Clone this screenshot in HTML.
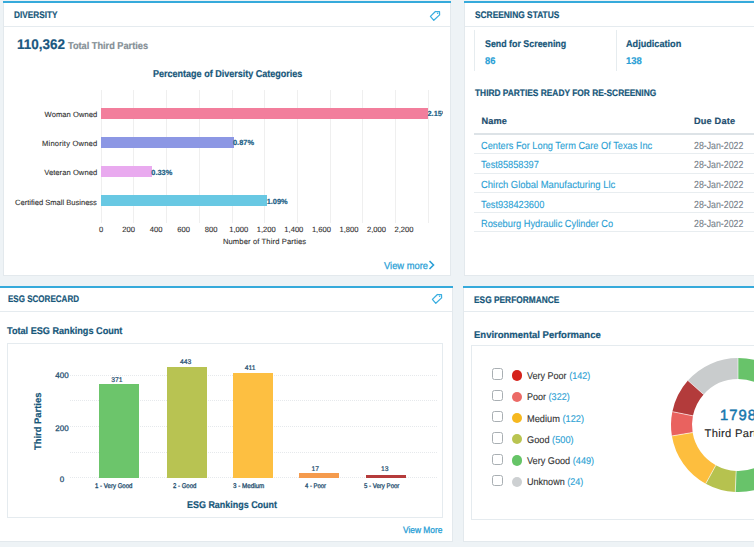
<!DOCTYPE html>
<html><head><meta charset="utf-8"><style>
html,body{margin:0;padding:0;}
body{width:754px;height:547px;overflow:hidden;position:relative;background:#eef3f6;font-family:"Liberation Sans", sans-serif;}
span{text-rendering:geometricPrecision;}
span.r{-webkit-text-stroke:0.12px currentColor;}
span.b{-webkit-text-stroke:0.2px currentColor;}
</style></head><body>
<div style="position:absolute;left:3px;top:1px;width:448px;height:275px;background:#fff;box-sizing:border-box;border:1px solid #e3e9ed;"></div><div style="position:absolute;left:3px;top:1px;width:448px;height:2px;background:#36aadb;"></div><div style="position:absolute;left:4px;top:26px;width:446px;height:1px;background:#e5ebef;"></div><svg style="position:absolute;left:428px;top:9px" width="14" height="14" viewBox="0 0 14 14"><path d="M2.4 7.4 L7.4 2.5 L11.5 2.6 L11.6 5.9 L5.8 11.3 Z" fill="none" stroke="#3aaee0" stroke-width="1.25" stroke-linejoin="round"/><circle cx="9.6" cy="4.3" r="0.75" fill="#3aaee0"/></svg><div style="position:absolute;left:101px;top:90px;width:1px;height:133px;background:#efefef;"></div><div style="position:absolute;left:133px;top:90px;width:1px;height:133px;background:#efefef;"></div><div style="position:absolute;left:166px;top:90px;width:1px;height:133px;background:#efefef;"></div><div style="position:absolute;left:199px;top:90px;width:1px;height:133px;background:#efefef;"></div><div style="position:absolute;left:232px;top:90px;width:1px;height:133px;background:#efefef;"></div><div style="position:absolute;left:264px;top:90px;width:1px;height:133px;background:#efefef;"></div><div style="position:absolute;left:297px;top:90px;width:1px;height:133px;background:#efefef;"></div><div style="position:absolute;left:330px;top:90px;width:1px;height:133px;background:#efefef;"></div><div style="position:absolute;left:362px;top:90px;width:1px;height:133px;background:#efefef;"></div><div style="position:absolute;left:395px;top:90px;width:1px;height:133px;background:#efefef;"></div><div style="position:absolute;left:428px;top:90px;width:1px;height:133px;background:#efefef;"></div><div style="position:absolute;left:101px;top:107.5px;width:327px;height:11px;background:#f27e9c;"></div><div style="position:absolute;left:101px;top:136.7px;width:132.5px;height:11px;background:#8c97e4;"></div><div style="position:absolute;left:101px;top:165.9px;width:50.80000000000001px;height:11px;background:#e9aaef;"></div><div style="position:absolute;left:101px;top:195.1px;width:166.2px;height:11px;background:#68c8e3;"></div><svg style="position:absolute;left:428px;top:260px" width="8" height="10" viewBox="0 0 8 10"><path d="M1.5 1 L5.5 5 L1.5 9" fill="none" stroke="#2a9fd6" stroke-width="1.6"/></svg><div style="position:absolute;left:464px;top:1px;width:296px;height:275px;background:#fff;box-sizing:border-box;border:1px solid #e3e9ed;"></div><div style="position:absolute;left:464px;top:1px;width:296px;height:2px;background:#36aadb;"></div><div style="position:absolute;left:465px;top:26px;width:295px;height:1px;background:#e5ebef;"></div><div style="position:absolute;left:474px;top:30px;width:1px;height:41px;background:#e6ecef;"></div><div style="position:absolute;left:616px;top:30px;width:1px;height:41px;background:#e6ecef;"></div><div style="position:absolute;left:474px;top:133px;width:290px;height:2px;background:#dde3e7;"></div><div style="position:absolute;left:474px;top:153px;width:290px;height:1px;background:#e8edf0;"></div><div style="position:absolute;left:474px;top:173px;width:290px;height:1px;background:#e8edf0;"></div><div style="position:absolute;left:474px;top:192px;width:290px;height:1px;background:#e8edf0;"></div><div style="position:absolute;left:474px;top:212px;width:290px;height:1px;background:#e8edf0;"></div><div style="position:absolute;left:474px;top:231px;width:290px;height:1px;background:#e8edf0;"></div><div style="position:absolute;left:0px;top:286px;width:453px;height:256px;background:#fff;box-sizing:border-box;border:1px solid #e3e9ed;border-left:none;"></div><div style="position:absolute;left:0px;top:286px;width:453px;height:2px;background:#36aadb;"></div><div style="position:absolute;left:0px;top:311px;width:452px;height:1px;background:#e5ebef;"></div><svg style="position:absolute;left:430px;top:292px" width="14" height="14" viewBox="0 0 14 14"><path d="M2.4 7.4 L7.4 2.5 L11.5 2.6 L11.6 5.9 L5.8 11.3 Z" fill="none" stroke="#3aaee0" stroke-width="1.25" stroke-linejoin="round"/><circle cx="9.6" cy="4.3" r="0.75" fill="#3aaee0"/></svg><div style="position:absolute;left:7px;top:343px;width:436px;height:175px;background:#fff;box-sizing:border-box;border:1px solid #e5ebef;"></div><div style="position:absolute;left:70px;top:374.5px;width:367px;height:0;border-top:1px dotted #e6e9ec"></div><div style="position:absolute;left:70px;top:400.2px;width:367px;height:0;border-top:1px dotted #e6e9ec"></div><div style="position:absolute;left:70px;top:425.8px;width:367px;height:0;border-top:1px dotted #e6e9ec"></div><div style="position:absolute;left:70px;top:451.5px;width:367px;height:0;border-top:1px dotted #e6e9ec"></div><div style="position:absolute;left:70px;top:477px;width:367px;height:0;border-top:1px dotted #e6e9ec"></div><div style="position:absolute;left:98.5px;top:384.2px;width:40px;height:93.5px;background:#6cc56b;"></div><div style="position:absolute;left:167.2px;top:366.6px;width:40px;height:111.09999999999997px;background:#b8c352;"></div><div style="position:absolute;left:233px;top:373px;width:40px;height:104.69999999999999px;background:#fdbf41;"></div><div style="position:absolute;left:298.6px;top:473.4px;width:40px;height:4.300000000000011px;background:#f59b4d;"></div><div style="position:absolute;left:365.5px;top:475.3px;width:40px;height:2.3999999999999773px;background:#b53b3b;"></div><div style="position:absolute;left:463px;top:286px;width:297px;height:256px;background:#fff;box-sizing:border-box;border:1px solid #e3e9ed;"></div><div style="position:absolute;left:463px;top:286px;width:297px;height:2px;background:#36aadb;"></div><div style="position:absolute;left:464px;top:311px;width:296px;height:1px;background:#e5ebef;"></div><div style="position:absolute;left:471px;top:345px;width:300px;height:175px;background:#fff;box-sizing:border-box;border:1px solid #e5ebef;"></div><div style="position:absolute;left:492px;top:368.29999999999995px;width:11px;height:11.5px;background:#fff;box-sizing:border-box;border:1.2px solid #a9afb3;border-radius:2.5px"></div><div style="position:absolute;left:512px;top:370.2px;width:10.4px;height:10.4px;background:#d5221b;border-radius:50%"></div><div style="position:absolute;left:492px;top:389.59999999999997px;width:11px;height:11.5px;background:#fff;box-sizing:border-box;border:1.2px solid #a9afb3;border-radius:2.5px"></div><div style="position:absolute;left:512px;top:391.5px;width:10.4px;height:10.4px;background:#ec6a66;border-radius:50%"></div><div style="position:absolute;left:492px;top:410.9px;width:11px;height:11.5px;background:#fff;box-sizing:border-box;border:1.2px solid #a9afb3;border-radius:2.5px"></div><div style="position:absolute;left:512px;top:412.8px;width:10.4px;height:10.4px;background:#f6b81f;border-radius:50%"></div><div style="position:absolute;left:492px;top:432.19999999999993px;width:11px;height:11.5px;background:#fff;box-sizing:border-box;border:1.2px solid #a9afb3;border-radius:2.5px"></div><div style="position:absolute;left:512px;top:434.09999999999997px;width:10.4px;height:10.4px;background:#b9c451;border-radius:50%"></div><div style="position:absolute;left:492px;top:453.49999999999994px;width:11px;height:11.5px;background:#fff;box-sizing:border-box;border:1.2px solid #a9afb3;border-radius:2.5px"></div><div style="position:absolute;left:512px;top:455.4px;width:10.4px;height:10.4px;background:#66c467;border-radius:50%"></div><div style="position:absolute;left:492px;top:474.79999999999995px;width:11px;height:11.5px;background:#fff;box-sizing:border-box;border:1.2px solid #a9afb3;border-radius:2.5px"></div><div style="position:absolute;left:512px;top:476.7px;width:10.4px;height:10.4px;background:#cdd0d2;border-radius:50%"></div><svg style="position:absolute;left:463px;top:286px" width="300" height="255" viewBox="0 0 300 255"><path d="M275.00 82.50 A56.5 56.5 0 1 1 272.73 195.45" fill="none" stroke="#68c36a" stroke-width="21"/><path d="M232.75 101.49 A56.5 56.5 0 0 1 275.00 82.50" fill="none" stroke="#c9cccd" stroke-width="21"/><path d="M219.63 127.74 A56.5 56.5 0 0 1 232.75 101.49" fill="none" stroke="#b33b3b" stroke-width="21"/><path d="M219.26 148.23 A56.5 56.5 0 0 1 219.63 127.74" fill="none" stroke="#e9625f" stroke-width="21"/><path d="M247.78 188.51 A56.5 56.5 0 0 1 219.26 148.23" fill="none" stroke="#fdbe3e" stroke-width="21"/><path d="M272.73 195.45 A56.5 56.5 0 0 1 247.78 188.51" fill="none" stroke="#b6c24f" stroke-width="21"/><line x1="275.00" y1="93.00" x2="275.00" y2="72.00" stroke="#fff" stroke-width="0.6"/><line x1="240.60" y1="108.46" x2="224.90" y2="94.52" stroke="#fff" stroke-width="0.6"/><line x1="229.92" y1="129.83" x2="209.35" y2="125.64" stroke="#fff" stroke-width="0.6"/><line x1="229.62" y1="146.51" x2="208.90" y2="149.94" stroke="#fff" stroke-width="0.6"/><line x1="252.84" y1="179.31" x2="242.72" y2="197.71" stroke="#fff" stroke-width="0.6"/><line x1="273.15" y1="184.96" x2="272.31" y2="205.95" stroke="#fff" stroke-width="0.6"/></svg>
<span class="b" style="position:absolute;left:14.00px;top:11.00px;font-size:9.5px;line-height:9.5px;font-weight:700;color:#17577a;white-space:nowrap;transform-origin:0px 7px;transform:scaleX(0.8673);">DIVERSITY</span><span class="b" style="position:absolute;left:17.00px;top:37.00px;font-size:14px;line-height:14px;font-weight:700;color:#1a5780;white-space:nowrap;transform-origin:0px 12px;transform:scaleX(0.9630);">110,362</span><span class="b" style="position:absolute;left:68.00px;top:42.00px;font-size:10px;line-height:10px;font-weight:700;color:#858f96;white-space:nowrap;transform-origin:0px 7px;transform:scaleX(0.9189);">Total Third Parties</span><span class="b" style="position:absolute;left:152.70px;top:70.00px;font-size:10px;line-height:10px;font-weight:700;color:#17577a;white-space:nowrap;transform-origin:0px 7px;transform:scaleX(0.9020);">Percentage of Diversity Categories</span><span class="r" style="position:absolute;left:44.60px;top:111.00px;font-size:7.6px;line-height:7.6px;font-weight:400;color:#333;white-space:nowrap;letter-spacing:0.040px;">Woman Owned</span><span class="b" style="position:absolute;left:427.50px;top:110.00px;font-size:7.4px;line-height:7.4px;font-weight:700;color:#225f86;white-space:nowrap;clip-path:inset(-3px calc(100% - 15.5px) -3px 0);">2.15%</span><span class="r" style="position:absolute;left:42.10px;top:140.00px;font-size:7.6px;line-height:7.6px;font-weight:400;color:#333;white-space:nowrap;letter-spacing:0.180px;">Minority Owned</span><span class="b" style="position:absolute;left:233.00px;top:139.00px;font-size:7.4px;line-height:7.4px;font-weight:700;color:#225f86;white-space:nowrap;">0.87%</span><span class="r" style="position:absolute;left:44.20px;top:169.00px;font-size:7.6px;line-height:7.6px;font-weight:400;color:#333;white-space:nowrap;letter-spacing:0.053px;">Veteran Owned</span><span class="b" style="position:absolute;left:151.30px;top:169.00px;font-size:7.4px;line-height:7.4px;font-weight:700;color:#225f86;white-space:nowrap;">0.33%</span><span class="r" style="position:absolute;left:15.30px;top:199.00px;font-size:7.6px;line-height:7.6px;font-weight:400;color:#333;white-space:nowrap;transform-origin:0px 6px;transform:scaleX(0.9952);">Certified Small Business</span><span class="b" style="position:absolute;left:266.70px;top:198.00px;font-size:7.4px;line-height:7.4px;font-weight:700;color:#225f86;white-space:nowrap;">1.09%</span><span class="r" style="position:absolute;left:98.88px;top:226.00px;font-size:7.6px;line-height:7.6px;font-weight:400;color:#333;white-space:nowrap;">0</span><span class="r" style="position:absolute;left:122.21px;top:226.00px;font-size:7.6px;line-height:7.6px;font-weight:400;color:#333;white-space:nowrap;">200</span><span class="r" style="position:absolute;left:149.76px;top:226.00px;font-size:7.6px;line-height:7.6px;font-weight:400;color:#333;white-space:nowrap;">400</span><span class="r" style="position:absolute;left:177.31px;top:226.00px;font-size:7.6px;line-height:7.6px;font-weight:400;color:#333;white-space:nowrap;">600</span><span class="r" style="position:absolute;left:204.86px;top:226.00px;font-size:7.6px;line-height:7.6px;font-weight:400;color:#333;white-space:nowrap;">800</span><span class="r" style="position:absolute;left:229.24px;top:226.00px;font-size:7.6px;line-height:7.6px;font-weight:400;color:#333;white-space:nowrap;">1,000</span><span class="r" style="position:absolute;left:256.79px;top:226.00px;font-size:7.6px;line-height:7.6px;font-weight:400;color:#333;white-space:nowrap;">1,200</span><span class="r" style="position:absolute;left:284.34px;top:226.00px;font-size:7.6px;line-height:7.6px;font-weight:400;color:#333;white-space:nowrap;">1,400</span><span class="r" style="position:absolute;left:311.89px;top:226.00px;font-size:7.6px;line-height:7.6px;font-weight:400;color:#333;white-space:nowrap;">1,600</span><span class="r" style="position:absolute;left:339.44px;top:226.00px;font-size:7.6px;line-height:7.6px;font-weight:400;color:#333;white-space:nowrap;">1,800</span><span class="r" style="position:absolute;left:366.99px;top:226.00px;font-size:7.6px;line-height:7.6px;font-weight:400;color:#333;white-space:nowrap;">2,000</span><span class="r" style="position:absolute;left:394.54px;top:226.00px;font-size:7.6px;line-height:7.6px;font-weight:400;color:#333;white-space:nowrap;">2,200</span><span class="r" style="position:absolute;left:222.90px;top:238.00px;font-size:7.6px;line-height:7.6px;font-weight:400;color:#333;white-space:nowrap;letter-spacing:0.124px;">Number of Third Parties</span><span class="r" style="position:absolute;left:383.90px;top:262.00px;font-size:10px;line-height:10px;font-weight:400;color:#2a9fd6;white-space:nowrap;transform-origin:0px 7px;transform:scaleX(0.9349);-webkit-text-stroke:0.25px #2a9fd6;">View more</span><span class="b" style="position:absolute;left:474.50px;top:11.00px;font-size:9.5px;line-height:9.5px;font-weight:700;color:#17577a;white-space:nowrap;transform-origin:0px 7px;transform:scaleX(0.8807);">SCREENING STATUS</span><span class="b" style="position:absolute;left:484.80px;top:40.00px;font-size:9.8px;line-height:9.8px;font-weight:700;color:#17577a;white-space:nowrap;transform-origin:0px 7px;transform:scaleX(0.9039);">Send for Screening</span><span class="b" style="position:absolute;left:484.80px;top:57.00px;font-size:9.8px;line-height:9.8px;font-weight:700;color:#2a9fd6;white-space:nowrap;transform-origin:0px 7px;transform:scaleX(0.9536);">86</span><span class="b" style="position:absolute;left:626.10px;top:40.00px;font-size:9.8px;line-height:9.8px;font-weight:700;color:#17577a;white-space:nowrap;transform-origin:0px 7px;transform:scaleX(0.9304);">Adjudication</span><span class="b" style="position:absolute;left:626.10px;top:57.00px;font-size:9.8px;line-height:9.8px;font-weight:700;color:#2a9fd6;white-space:nowrap;transform-origin:0px 7px;transform:scaleX(0.9658);">138</span><span class="b" style="position:absolute;left:474.90px;top:88.00px;font-size:9.4px;line-height:9.4px;font-weight:700;color:#17577a;white-space:nowrap;transform-origin:0px 8px;transform:scaleX(0.8912);">THIRD PARTIES READY FOR RE-SCREENING</span><span class="b" style="position:absolute;left:481.50px;top:117.00px;font-size:9.2px;line-height:9.2px;font-weight:700;color:#1f4f70;white-space:nowrap;letter-spacing:0.090px;">Name</span><span class="b" style="position:absolute;left:694.00px;top:117.00px;font-size:9.2px;line-height:9.2px;font-weight:700;color:#1f4f70;white-space:nowrap;letter-spacing:0.167px;">Due Date</span><span class="r" style="position:absolute;left:481.00px;top:142.00px;font-size:10.3px;line-height:10.3px;font-weight:400;color:#2b9fd4;white-space:nowrap;transform-origin:0px 7px;transform:scaleX(0.8974);">Centers For Long Term Care Of Texas Inc</span><span class="r" style="position:absolute;left:694.00px;top:142.00px;font-size:10.3px;line-height:10.3px;font-weight:400;color:#77818a;white-space:nowrap;transform-origin:0px 7px;transform:scaleX(0.8525);">28-Jan-2022</span><span class="r" style="position:absolute;left:481.00px;top:161.00px;font-size:10.3px;line-height:10.3px;font-weight:400;color:#2b9fd4;white-space:nowrap;transform-origin:0px 7px;transform:scaleX(0.8933);">Test85858397</span><span class="r" style="position:absolute;left:694.00px;top:161.00px;font-size:10.3px;line-height:10.3px;font-weight:400;color:#77818a;white-space:nowrap;transform-origin:0px 7px;transform:scaleX(0.8525);">28-Jan-2022</span><span class="r" style="position:absolute;left:481.00px;top:181.00px;font-size:10.3px;line-height:10.3px;font-weight:400;color:#2b9fd4;white-space:nowrap;transform-origin:0px 7px;transform:scaleX(0.9159);">Chirch Global Manufacturing Llc</span><span class="r" style="position:absolute;left:694.00px;top:181.00px;font-size:10.3px;line-height:10.3px;font-weight:400;color:#77818a;white-space:nowrap;transform-origin:0px 7px;transform:scaleX(0.8525);">28-Jan-2022</span><span class="r" style="position:absolute;left:481.00px;top:201.00px;font-size:10.3px;line-height:10.3px;font-weight:400;color:#2b9fd4;white-space:nowrap;transform-origin:0px 7px;transform:scaleX(0.8987);">Test938423600</span><span class="r" style="position:absolute;left:694.00px;top:201.00px;font-size:10.3px;line-height:10.3px;font-weight:400;color:#77818a;white-space:nowrap;transform-origin:0px 7px;transform:scaleX(0.8525);">28-Jan-2022</span><span class="r" style="position:absolute;left:481.00px;top:220.00px;font-size:10.3px;line-height:10.3px;font-weight:400;color:#2b9fd4;white-space:nowrap;transform-origin:0px 7px;transform:scaleX(0.8988);">Roseburg Hydraulic Cylinder Co</span><span class="r" style="position:absolute;left:694.00px;top:220.00px;font-size:10.3px;line-height:10.3px;font-weight:400;color:#77818a;white-space:nowrap;transform-origin:0px 7px;transform:scaleX(0.8525);">28-Jan-2022</span><span class="b" style="position:absolute;left:7.50px;top:295.00px;font-size:9.5px;line-height:9.5px;font-weight:700;color:#17577a;white-space:nowrap;transform-origin:0px 7px;transform:scaleX(0.8459);">ESG SCORECARD</span><span class="b" style="position:absolute;left:7.20px;top:327.00px;font-size:9.8px;line-height:9.8px;font-weight:700;color:#17577a;white-space:nowrap;transform-origin:0px 7px;transform:scaleX(0.9312);">Total ESG Rankings Count</span><span class="r" style="position:absolute;left:55.32px;top:372.00px;font-size:8px;line-height:8px;font-weight:400;color:#1f4f70;white-space:nowrap;-webkit-text-stroke:0.28px #1f4f70;">400</span><span class="r" style="position:absolute;left:55.32px;top:425.00px;font-size:8px;line-height:8px;font-weight:400;color:#1f4f70;white-space:nowrap;-webkit-text-stroke:0.28px #1f4f70;">200</span><span class="r" style="position:absolute;left:59.77px;top:476.00px;font-size:8px;line-height:8px;font-weight:400;color:#1f4f70;white-space:nowrap;-webkit-text-stroke:0.28px #1f4f70;">0</span><span class="r" style="position:absolute;left:111.13px;top:378.00px;font-size:6.8px;line-height:6.8px;font-weight:400;color:#1f4f70;white-space:nowrap;-webkit-text-stroke:0.22px #1f4f70;">371</span><span class="r" style="position:absolute;left:95.25px;top:484.00px;font-size:6.8px;line-height:6.8px;font-weight:400;color:#1f4f70;white-space:nowrap;transform-origin:0px 4px;transform:scaleX(0.8942);-webkit-text-stroke:0.3px #1f4f70;">1 - Very Good</span><span class="r" style="position:absolute;left:180.03px;top:360.00px;font-size:6.8px;line-height:6.8px;font-weight:400;color:#1f4f70;white-space:nowrap;-webkit-text-stroke:0.22px #1f4f70;">443</span><span class="r" style="position:absolute;left:172.70px;top:484.00px;font-size:6.8px;line-height:6.8px;font-weight:400;color:#1f4f70;white-space:nowrap;transform-origin:0px 4px;transform:scaleX(0.8846);-webkit-text-stroke:0.3px #1f4f70;">2 - Good</span><span class="r" style="position:absolute;left:244.68px;top:366.00px;font-size:6.8px;line-height:6.8px;font-weight:400;color:#1f4f70;white-space:nowrap;-webkit-text-stroke:0.22px #1f4f70;">411</span><span class="r" style="position:absolute;left:233.05px;top:484.00px;font-size:6.8px;line-height:6.8px;font-weight:400;color:#1f4f70;white-space:nowrap;transform-origin:0px 4px;transform:scaleX(0.9206);-webkit-text-stroke:0.3px #1f4f70;">3 - Medium</span><span class="r" style="position:absolute;left:311.42px;top:467.00px;font-size:6.8px;line-height:6.8px;font-weight:400;color:#1f4f70;white-space:nowrap;-webkit-text-stroke:0.22px #1f4f70;">17</span><span class="r" style="position:absolute;left:305.05px;top:484.00px;font-size:6.8px;line-height:6.8px;font-weight:400;color:#1f4f70;white-space:nowrap;transform-origin:0px 4px;transform:scaleX(0.8724);-webkit-text-stroke:0.3px #1f4f70;">4 - Poor</span><span class="r" style="position:absolute;left:380.92px;top:467.00px;font-size:6.8px;line-height:6.8px;font-weight:400;color:#1f4f70;white-space:nowrap;-webkit-text-stroke:0.22px #1f4f70;">13</span><span class="r" style="position:absolute;left:364.00px;top:484.00px;font-size:6.8px;line-height:6.8px;font-weight:400;color:#1f4f70;white-space:nowrap;transform-origin:0px 4px;transform:scaleX(0.8923);-webkit-text-stroke:0.3px #1f4f70;">5 - Very Poor</span><span class="b" style="position:absolute;left:187.20px;top:501.00px;font-size:9.8px;line-height:9.8px;font-weight:700;color:#17577a;white-space:nowrap;transform-origin:0px 7px;transform:scaleX(0.9134);">ESG Rankings Count</span><span class="r" style="position:absolute;left:402.50px;top:526.00px;font-size:9.2px;line-height:9.2px;font-weight:400;color:#2a9fd6;white-space:nowrap;transform-origin:0px 7px;transform:scaleX(0.9113);-webkit-text-stroke:0.3px #2a9fd6;">View More</span><span class="b" style="position:absolute;left:473.50px;top:296.00px;font-size:9.5px;line-height:9.5px;font-weight:700;color:#17577a;white-space:nowrap;transform-origin:0px 7px;transform:scaleX(0.8793);">ESG PERFORMANCE</span><span class="b" style="position:absolute;left:473.50px;top:331.00px;font-size:9.8px;line-height:9.8px;font-weight:700;color:#17577a;white-space:nowrap;transform-origin:0px 7px;transform:scaleX(0.9696);">Environmental Performance</span><span class="r" style="position:absolute;left:527.30px;top:372.00px;font-size:9.8px;line-height:9.8px;font-weight:400;color:#333;white-space:nowrap;transform-origin:0px 7px;transform:scaleX(0.9209);">Very Poor <span style="color:#2b9fd4">(142)</span></span><span class="r" style="position:absolute;left:527.30px;top:393.00px;font-size:9.8px;line-height:9.8px;font-weight:400;color:#333;white-space:nowrap;transform-origin:0px 7px;transform:scaleX(0.9223);">Poor <span style="color:#2b9fd4">(322)</span></span><span class="r" style="position:absolute;left:527.30px;top:415.00px;font-size:9.8px;line-height:9.8px;font-weight:400;color:#333;white-space:nowrap;transform-origin:0px 7px;transform:scaleX(0.9445);">Medium <span style="color:#2b9fd4">(122)</span></span><span class="r" style="position:absolute;left:527.30px;top:436.00px;font-size:9.8px;line-height:9.8px;font-weight:400;color:#333;white-space:nowrap;transform-origin:0px 7px;transform:scaleX(0.9399);">Good <span style="color:#2b9fd4">(500)</span></span><span class="r" style="position:absolute;left:527.30px;top:457.00px;font-size:9.8px;line-height:9.8px;font-weight:400;color:#333;white-space:nowrap;transform-origin:0px 7px;transform:scaleX(0.9334);">Very Good <span style="color:#2b9fd4">(449)</span></span><span class="r" style="position:absolute;left:527.30px;top:478.00px;font-size:9.8px;line-height:9.8px;font-weight:400;color:#333;white-space:nowrap;transform-origin:0px 7px;transform:scaleX(0.9227);">Unknown <span style="color:#2b9fd4">(24)</span></span><span class="b" style="position:absolute;left:41.30px;top:443.00px;font-size:9.6px;line-height:9.6px;font-weight:700;color:#17577a;white-space:nowrap;transform-origin:0px 7px;transform:rotate(-90deg) scaleX(0.9786);">Third Parties</span><span class="r" style="position:absolute;left:720.00px;top:409.00px;font-size:14.8px;line-height:14.8px;font-weight:400;color:#1677ad;white-space:nowrap;letter-spacing:1.026px;-webkit-text-stroke:0.5px #1677ad;">1798</span><span class="r" style="position:absolute;left:704.60px;top:429.00px;font-size:11.2px;line-height:11.2px;font-weight:400;color:#262626;white-space:nowrap;letter-spacing:0.282px;">Third Parties</span>
</body></html>
